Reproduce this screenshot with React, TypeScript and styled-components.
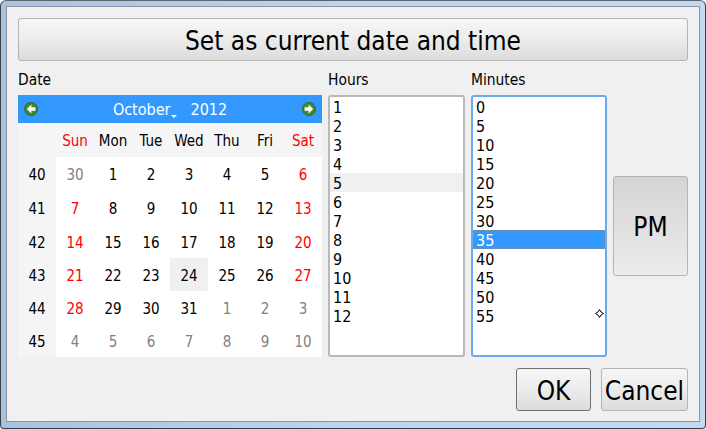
import React from 'react';
import styled, { createGlobalStyle } from 'styled-components';

const Global = createGlobalStyle`
  html, body {
    margin: 0;
    padding: 0;
    width: 706px;
    height: 429px;
    overflow: hidden;
    background: #fff;
  }
  * { box-sizing: border-box; }
`;

const FONT = `'DejaVu Sans Condensed', 'DejaVu Sans', sans-serif`;

const Frame = styled.div`
  width: 706px;
  height: 429px;
  padding: 5px 5px 6px 5px;
  border: 1px solid #3a4048;
  border-radius: 6px 6px 4px 4px;
  background: linear-gradient(90deg, #a9c3dc, #bcd6ee 50%, #c2daf2);
  border-top-color: #5b6670;
`;

const Dialog = styled.div`
  width: 100%;
  height: 100%;
  padding: 11px 11px 9px 11px;
  border: 1px solid #8c96a0;
  background: #f0f0f0;
  font-family: ${FONT};
  color: #000;
  display: flex;
  flex-direction: column;
`;

const Button = styled.div<{ $w?: number; $h: number; $size: number; $pressed?: boolean; $default?: boolean }>`
  width: ${p => (p.$w ? `${p.$w}px` : '100%')};
  height: ${p => p.$h}px;
  padding-top: 2px;
  display: flex;
  align-items: center;
  justify-content: center;
  font-size: ${p => p.$size}px;
  border: 1px solid ${p => (p.$default ? '#707070' : '#b4b4b4')};
  border-radius: 3px;
  background: ${p =>
    p.$pressed
      ? 'linear-gradient(180deg, #d4d4d4, #ececec)'
      : 'linear-gradient(180deg, #f6f6f6 0%, #ededed 45%, #dcdcdc 100%)'};
`;

const Columns = styled.div`
  display: grid;
  grid-template-columns: 304px 137px 136px 75px;
  grid-template-rows: 34px 262px;
  column-gap: 6px;
`;

const Label = styled.div`
  font-size: 15.4px;
  line-height: 19px;
  padding-top: 10px;
`;

const Calendar = styled.div`
  display: flex;
  flex-direction: column;
  background: #f5f5f5;
  height: 262px;
`;

const NavBar = styled.div`
  height: 28px;
  background: #3399ff;
  color: #fff;
  font-size: 16px;
  display: flex;
  align-items: center;
  justify-content: space-between;
  padding: 0 6px;
`;

const NavTitle = styled.div`
  display: flex;
  align-items: center;
  gap: 20px;
`;

const MonthName = styled.span`
  position: relative;
`;

const MonthCaret = styled.span`
  position: absolute;
  right: -7px;
  bottom: 1px;
  width: 0;
  height: 0;
  border-left: 3px solid transparent;
  border-right: 3px solid transparent;
  border-top: 3px solid #fff;
`;

const Grid = styled.div`
  display: grid;
  grid-template-columns: repeat(8, 38px);
  grid-template-rows: 34px 34px 34px 33px 33px 33px 33px;
  font-size: 15px;
`;

const Cell = styled.div<{ $tone?: string; $bg?: string }>`
  display: flex;
  align-items: center;
  justify-content: center;
  padding-top: 2px;
  color: ${p => p.$tone || '#000'};
  background: ${p => p.$bg || 'transparent'};
`;

const ListBox = styled.div<{ $focus?: boolean }>`
  position: relative;
  height: 262px;
  background: #fff;
  border: 2px solid ${p => (p.$focus ? '#69a9ef' : '#b9b9b9')};
  border-radius: 3px;
  font-size: 16px;
`;

const ListRow = styled.div<{ $state?: 'hover' | 'selected' }>`
  height: 19px;
  line-height: 21px;
  padding-left: 3px;
  background: ${p => (p.$state === 'selected' ? '#3399ff' : p.$state === 'hover' ? '#f0f0f0' : 'transparent')};
  color: ${p => (p.$state === 'selected' ? '#fff' : '#000')};
  outline: ${p => (p.$state === 'selected' ? '1px dotted #6f93b8' : 'none')};
  outline-offset: -1px;
`;

const CursorMark = styled.svg`
  position: absolute;
  left: 122px;
  top: 212px;
`;

const PmCell = styled.div`
  display: flex;
  align-items: center;
`;

const Footer = styled.div`
  display: flex;
  justify-content: flex-end;
  gap: 10px;
  margin-top: 11px;
`;

const Arrow = ({ flip }: { flip?: boolean }) => (
  <svg width="14" height="14" viewBox="0 0 14 14" style={flip ? { transform: 'scaleX(-1)' } : undefined}>
    <circle cx="7" cy="7" r="6.5" fill="#3f8a2e" stroke="#2a6a22" strokeWidth="1" />
    <path d="M7.4 2.4 L2.8 7 L7.4 11.6 V8.8 H11.4 V5.2 H7.4 Z" fill="#fff" />
  </svg>
);

const weekDays = [
  { t: 'Sun', c: '#ff0000' },
  { t: 'Mon' },
  { t: 'Tue' },
  { t: 'Wed' },
  { t: 'Thu' },
  { t: 'Fri' },
  { t: 'Sat', c: '#ff0000' },
];

const weeks: [number, number[]][] = [
  [40, [30, 1, 2, 3, 4, 5, 6]],
  [41, [7, 8, 9, 10, 11, 12, 13]],
  [42, [14, 15, 16, 17, 18, 19, 20]],
  [43, [21, 22, 23, 24, 25, 26, 27]],
  [44, [28, 29, 30, 31, 1, 2, 3]],
  [45, [4, 5, 6, 7, 8, 9, 10]],
];

const hours = [1, 2, 3, 4, 5, 6, 7, 8, 9, 10, 11, 12];
const minutes = [0, 5, 10, 15, 20, 25, 30, 35, 40, 45, 50, 55];

export default function App() {
  return (
    <>
      <Global />
      <Frame>
        <Dialog>
          <Button $h={43} $size={26}>Set as current date and time</Button>
          <Columns>
            <Label>Date</Label>
            <Label>Hours</Label>
            <Label>Minutes</Label>
            <div />
            <Calendar>
              <NavBar>
                <Arrow />
                <NavTitle>
                  <MonthName>October<MonthCaret /></MonthName>
                  <span>2012</span>
                </NavTitle>
                <Arrow flip />
              </NavBar>
              <Grid>
                <Cell />
                {weekDays.map(d => (
                  <Cell key={d.t} $tone={d.c}>{d.t}</Cell>
                ))}
                {weeks.map(([wk, days], w) => (
                  <React.Fragment key={wk}>
                    <Cell>{wk}</Cell>
                    {days.map((d, i) => {
                      const outside = (w === 0 && d > 20) || (w >= 4 && d < 20);
                      const weekend = i === 0 || i === 6;
                      const tone = outside ? '#808080' : weekend ? '#ff0000' : '#000';
                      return (
                        <Cell key={i} $tone={tone} $bg={d === 24 ? '#f0f0f0' : '#fff'}>{d}</Cell>
                      );
                    })}
                  </React.Fragment>
                ))}
              </Grid>
            </Calendar>
            <ListBox>
              {hours.map(h => (
                <ListRow key={h} $state={h === 5 ? 'hover' : undefined}>{h}</ListRow>
              ))}
            </ListBox>
            <ListBox $focus>
              {minutes.map(m => (
                <ListRow key={m} $state={m === 35 ? 'selected' : undefined}>{m}</ListRow>
              ))}
              <CursorMark width="9" height="9" viewBox="0 0 9 9">
                <path d="M4.5 0.5 L6 3 L8.5 4.5 L6 6 L4.5 8.5 L3 6 L0.5 4.5 L3 3 Z" fill="#fff" stroke="#000" strokeWidth="1" />
              </CursorMark>
            </ListBox>
            <PmCell>
              <Button $h={100} $size={26} $pressed>PM</Button>
            </PmCell>
          </Columns>
          <Footer>
            <Button $w={75} $h={43} $size={26} $default>OK</Button>
            <Button $w={87} $h={43} $size={26}>Cancel</Button>
          </Footer>
        </Dialog>
      </Frame>
    </>
  );
}
